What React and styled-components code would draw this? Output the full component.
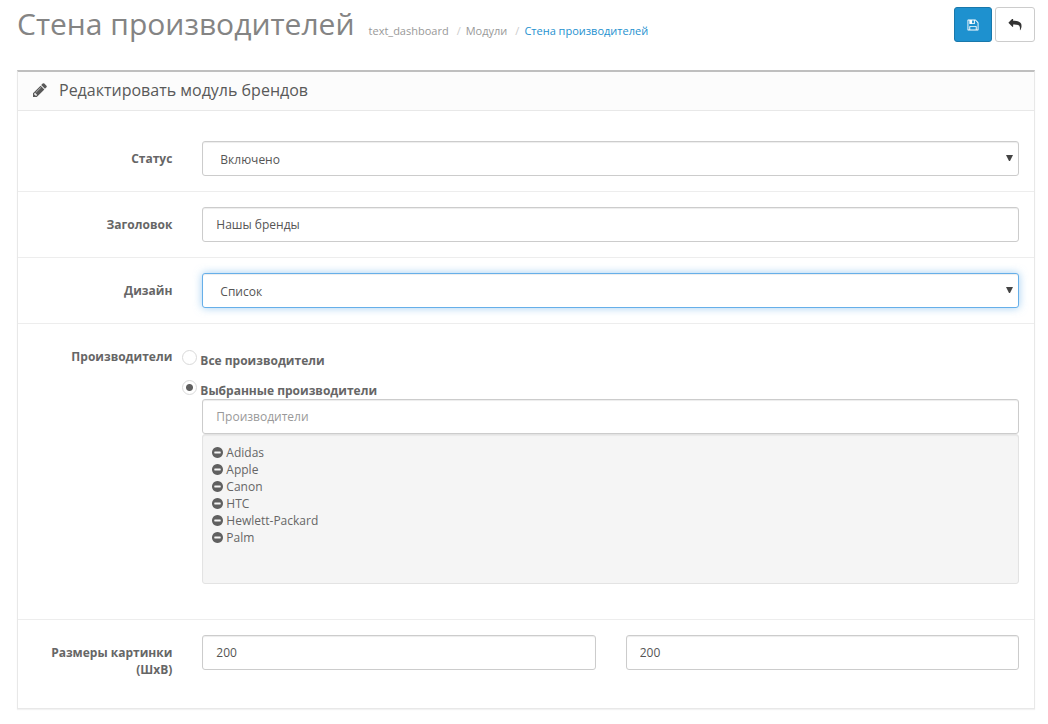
import React, { useState } from "react";
import styled, { createGlobalStyle, css } from "styled-components";

const GlobalStyle = createGlobalStyle`
  *, *::before, *::after { box-sizing: border-box; }
  body {
    margin: 0;
    background: #fff;
    color: #666;
    font: 400 12px/17px "Open Sans", "Noto Sans", sans-serif;
  }
  button, input, select { font: inherit; }
`;

const Page = styled.main`
  padding: 7px 13px 14px 17px;
`;

const PageHeader = styled.header`
  display: flex;
  justify-content: space-between;
  align-items: flex-start;
  margin-bottom: 28px;
`;

const Heading = styled.div`
  display: flex;
  align-items: baseline;
  gap: 14px;
`;

const Title = styled.h1`
  margin: 0;
  font-size: 30px;
  line-height: 33px;
  font-weight: 400;
  color: #848484;
`;

const Breadcrumb = styled.ol`
  display: flex;
  margin: 0;
  padding: 0;
  list-style: none;
  font-size: 11px;
`;

const Crumb = styled.li`
  & + &::before {
    content: "/";
    padding: 0 5px 0 8px;
    color: #ccc;
  }
`;

const CrumbLink = styled.a`
  color: ${(p) => (p.$current ? "#1e91cf" : "#999")};
  text-decoration: none;
`;

const Actions = styled.div`
  display: flex;
  gap: 3px;
`;

const IconButton = styled.button`
  display: flex;
  align-items: center;
  height: 35px;
  padding: 0 12px;
  border: 1px solid ${(p) => (p.$primary ? "#1978ab" : "#ccc")};
  border-radius: 3px;
  background: ${(p) => (p.$primary ? "#1e91cf" : "#fff")};
  color: ${(p) => (p.$primary ? "#fff" : "#333")};
  cursor: pointer;
`;

const Icon = styled.svg`
  display: block;
  flex: none;
  fill: currentColor;
`;

const Panel = styled.section`
  border: 1px solid #e8e8e8;
  border-top: 2px solid #bfbfbf;
  box-shadow: 0 1px 1px rgba(0, 0, 0, 0.05);
`;

const PanelHeading = styled.div`
  display: flex;
  align-items: center;
  gap: 12px;
  height: 39px;
  padding: 0 15px 2px;
  border-bottom: 1px solid #e8e8e8;
  background: #fcfcfc;
  color: #595959;
`;

const PanelTitle = styled.h2`
  margin: 0;
  font-size: 16px;
  line-height: 20px;
  font-weight: 400;
`;

const Form = styled.form`
  padding: 15px 0;
`;

const Row = styled.div`
  display: flex;
  padding: 15px 0;

  & + & { border-top: 1px solid #ededed; }
`;

const LabelCell = styled.div`
  flex: 0 0 calc(100% / 6);
  padding: 9px 15px 0;
  text-align: right;
  font-weight: 700;
`;

const ControlCell = styled.div`
  flex: 1;
  min-width: 0;
  padding: 0 15px;
`;

const control = css`
  display: block;
  width: 100%;
  height: 35px;
  border: 1px solid #ccc;
  border-radius: 3px;
  background: #fff;
  box-shadow: inset 0 1px 1px rgba(0, 0, 0, 0.075);
  color: #555;
  outline: none;
`;

const TextInput = styled.input`
  ${control}
  padding: 8px 13px;

  &::placeholder { color: #999; opacity: 1; }
`;

const SelectBox = styled.div`
  position: relative;
`;

const SelectInput = styled.select`
  ${control}
  appearance: none;
  padding: 9px 24px 7px 17px;

  ${(p) =>
    p.$active &&
    css`
      border-color: #66afe9;
      box-shadow: inset 0 1px 1px rgba(0, 0, 0, 0.075), 0 0 8px rgba(102, 175, 233, 0.6);
    `}
`;

const Arrow = styled(Icon)`
  position: absolute;
  top: 14px;
  right: 6px;
  color: #444;
  pointer-events: none;
`;

const RadioRow = styled.div`
  display: flex;
  align-items: flex-start;
  gap: 3px;
  height: 30px;
  margin-left: -20px;
  padding-top: 11px;
`;

const Radio = styled.input`
  appearance: none;
  width: 15px;
  height: 15px;
  margin: 0;
  border: 1px solid #d9d9d9;
  border-radius: 50%;
  background: #fff;

  &:checked {
    background: radial-gradient(circle, #606060 3px, #fff 4px);
  }
`;

const RadioLabel = styled.label`
  padding-top: 2px;
  font-weight: 700;
`;

const Well = styled.ul`
  height: 150px;
  margin: 0 0 20px;
  padding: 9px;
  overflow: auto;
  list-style: none;
  border: 1px solid #e3e3e3;
  border-radius: 3px;
  background: #f5f5f5;
  box-shadow: inset 0 1px 1px rgba(0, 0, 0, 0.05);
`;

const WellItem = styled.li`
  display: flex;
  align-items: center;
  gap: 3px;
`;

const RemoveButton = styled.button`
  padding: 0;
  border: 0;
  background: none;
  color: #606060;
  cursor: pointer;
`;

const Pair = styled.div`
  display: grid;
  grid-template-columns: 1fr 1fr;
  gap: 30px;
`;

const SaveIcon = () => (
  <Icon width="12" height="12" viewBox="64 64 1664 1664" aria-hidden="true">
    <path d="M512 1536h768v-384h-768v384zm896 0h128v-896q0-14-10-38.5t-20-34.5l-281-281q-10-10-34-20t-39-10v416q0 40-28 68t-68 28h-576q-40 0-68-28t-28-68v-416h-128v1280h128v-416q0-40 28-68t68-28h832q40 0 68 28t28 68v416zm-384-928v-320q0-13-9.5-22.5t-22.5-9.5h-192q-13 0-22.5 9.5t-9.5 22.5v320q0 13 9.5 22.5t22.5 9.5h192q13 0 22.5-9.5t9.5-22.5zm640 32v928q0 40-28 68t-68 28h-1344q-40 0-68-28t-28-68v-1344q0-40 28-68t68-28h928q40 0 88 20t76 48l280 280q28 28 48 76t20 88z" />
  </Icon>
);

const ReplyIcon = () => (
  <Icon width="14" height="12" viewBox="-64 128 1920 1646" aria-hidden="true">
    <path d="M1792 1120q0 166-127 451-3 7-10.5 24t-13.5 30-13 22q-12 17-28 17-15 0-23.5-10t-8.5-25q0-9 2.5-26.5t2.5-23.5q5-68 5-123 0-101-17.5-181t-48.5-138.5-80-101-105.5-69.5-133-42.5-154-21.5-175.5-6h-224v256q0 26-19 45t-45 19-45-19l-512-512q-19-19-19-45t19-45l512-512q19-19 45-19t45 19 19 45v256h224q713 0 875 403 53 134 53 333z" />
  </Icon>
);

const PencilIcon = () => (
  <Icon width="14" height="14" viewBox="128 128 1536 1536" aria-hidden="true">
    <path d="M491 1536l91-91-235-235-91 91v107h128v128h107zm523-928q0-22-22-22-10 0-17 7l-542 542q-7 7-7 17 0 22 22 22 10 0 17-7l542-542q7-7 7-17zm-54-192l416 416-832 832h-416v-416zm683 96q0 53-37 90l-166 166-416-416 166-165q36-38 90-38 53 0 91 38l235 234q37 39 37 91z" />
  </Icon>
);

const MinusIcon = () => (
  <Icon width="11" height="11" viewBox="128 128 1536 1536" aria-hidden="true">
    <path d="M1344 960v-128q0-26-19-45t-45-19h-768q-26 0-45 19t-19 45v128q0 26 19 45t45 19h768q26 0 45-19t19-45zm320-64q0 209-103 385.5t-279.5 279.5-385.5 103-385.5-103-279.5-279.5-103-385.5 103-385.5 279.5-279.5 385.5-103 385.5 103 279.5 279.5 103 385.5z" />
  </Icon>
);

function Select({ id, options, active }) {
  return (
    <SelectBox>
      <SelectInput id={id} $active={active}>
        {options.map((o) => (
          <option key={o}>{o}</option>
        ))}
      </SelectInput>
      <Arrow width="7" height="6" viewBox="0 0 7 6" aria-hidden="true">
        <path d="M0 0h7L4 6H3z" />
      </Arrow>
    </SelectBox>
  );
}

function Field({ label, htmlFor, children }) {
  return (
    <Row>
      <LabelCell>
        <label htmlFor={htmlFor}>{label}</label>
      </LabelCell>
      <ControlCell>{children}</ControlCell>
    </Row>
  );
}

export default function App() {
  const [mode, setMode] = useState("selected");
  const [brands, setBrands] = useState(["Adidas", "Apple", "Canon", "HTC", "Hewlett-Packard", "Palm"]);

  return (
    <>
      <GlobalStyle />
      <Page>
        <PageHeader>
          <Heading>
            <Title>Стена производителей</Title>
            <Breadcrumb>
              <Crumb><CrumbLink href="#dashboard">text_dashboard</CrumbLink></Crumb>
              <Crumb><CrumbLink href="#modules">Модули</CrumbLink></Crumb>
              <Crumb><CrumbLink href="#wall" $current>Стена производителей</CrumbLink></Crumb>
            </Breadcrumb>
          </Heading>
          <Actions>
            <IconButton type="submit" form="module-form" $primary aria-label="Сохранить"><SaveIcon /></IconButton>
            <IconButton type="button" aria-label="Назад"><ReplyIcon /></IconButton>
          </Actions>
        </PageHeader>

        <Panel>
          <PanelHeading>
            <PencilIcon />
            <PanelTitle>Редактировать модуль брендов</PanelTitle>
          </PanelHeading>
          <Form id="module-form" onSubmit={(e) => e.preventDefault()}>
            <Field label="Статус" htmlFor="status">
              <Select id="status" options={["Включено", "Отключено"]} />
            </Field>
            <Field label="Заголовок" htmlFor="title">
              <TextInput id="title" defaultValue="Нашы бренды" />
            </Field>
            <Field label="Дизайн" htmlFor="design">
              <Select id="design" options={["Список", "Карусель"]} active />
            </Field>
            <Field label="Производители" htmlFor="brand-search">
              <RadioRow>
                <Radio type="radio" name="mode" id="mode-all" checked={mode === "all"} onChange={() => setMode("all")} />
                <RadioLabel htmlFor="mode-all">Все производители</RadioLabel>
              </RadioRow>
              <RadioRow>
                <Radio type="radio" name="mode" id="mode-selected" checked={mode === "selected"} onChange={() => setMode("selected")} />
                <RadioLabel htmlFor="mode-selected">Выбранные производители</RadioLabel>
              </RadioRow>
              <TextInput id="brand-search" placeholder="Производители" />
              <Well>
                {brands.map((b) => (
                  <WellItem key={b}>
                    <RemoveButton type="button" aria-label={`Удалить ${b}`} onClick={() => setBrands(brands.filter((x) => x !== b))}>
                      <MinusIcon />
                    </RemoveButton>
                    {b}
                  </WellItem>
                ))}
              </Well>
            </Field>
            <Field label="Размеры картинки (ШхВ)" htmlFor="width">
              <Pair>
                <TextInput id="width" defaultValue="200" />
                <TextInput id="height" aria-label="Высота" defaultValue="200" />
              </Pair>
            </Field>
          </Form>
        </Panel>
      </Page>
    </>
  );
}
